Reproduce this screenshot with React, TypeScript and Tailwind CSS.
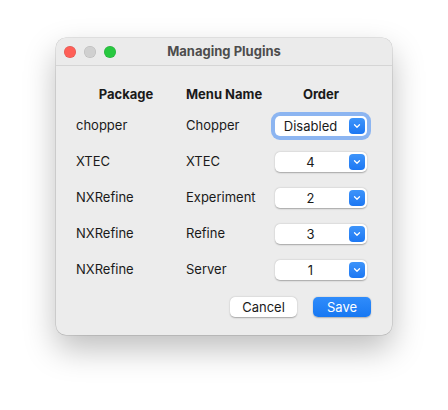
import { ChevronDown } from 'lucide-react';

const rows = [
  { pkg: 'chopper', menu: 'Chopper', order: 'Disabled', focused: true },
  { pkg: 'XTEC', menu: 'XTEC', order: '4' },
  { pkg: 'NXRefine', menu: 'Experiment', order: '2' },
  { pkg: 'NXRefine', menu: 'Refine', order: '3' },
  { pkg: 'NXRefine', menu: 'Server', order: '1' },
];

function Combo({ value, focused }: { value: string; focused?: boolean }) {
  return (
    <div
      className={
        'flex h-5 w-[92px] items-center rounded-[5px] bg-white shadow-[0_0.5px_1.5px_rgba(0,0,0,0.3)] ' +
        (focused ? 'ring-[4px] ring-[#8cb5f1]' : '')
      }
    >
      <span className="flex-1 pr-[3px] text-center text-[13px] leading-none text-[#1a1a1a]">{value}</span>
      <span className="mr-[2px] flex h-4 w-4 items-center justify-center rounded-[4px] bg-gradient-to-b from-[#3d94fa] to-[#1c77f3]">
        <ChevronDown size={10} strokeWidth={3} className="text-white" />
      </span>
    </div>
  );
}

export default function App() {
  return (
    <div
      className="h-[410px] w-[448px] bg-white pl-[56px] pt-[38px]"
      style={{ fontFamily: 'Inter, "Liberation Sans", sans-serif' }}
    >
      {/* Window */}
      <div className="flex h-[297px] w-[336px] flex-col overflow-hidden rounded-[10px] bg-[#ececec] shadow-[0_14px_32px_rgba(0,0,0,0.26),0_0_0_0.5px_rgba(0,0,0,0.18)]">
        {/* Title bar */}
        <div className="relative flex h-[28px] items-center border-b border-[#d5d5d5] bg-[#ebebeb]">
          <div className="absolute left-[8px] flex gap-2">
            <span className="h-3 w-3 rounded-full bg-[#fe5f57] shadow-[inset_0_0_0_0.5px_rgba(0,0,0,0.15)]" />
            <span className="h-3 w-3 rounded-full bg-[#d0d0d0] shadow-[inset_0_0_0_0.5px_rgba(0,0,0,0.12)]" />
            <span className="h-3 w-3 rounded-full bg-[#28c840] shadow-[inset_0_0_0_0.5px_rgba(0,0,0,0.15)]" />
          </div>
          <div className="flex-1 text-center text-[13px] font-bold text-[#4d4d4d]">Managing Plugins</div>
        </div>

        {/* Body */}
        <div className="flex flex-1 flex-col pl-5 pr-[21px] pt-[16px]">
          <div className="grid grid-cols-[110px_88px_94px] text-[13px] text-[#1a1a1a]">
            <div className="flex h-[26px] items-center justify-center pr-[10px] font-bold">Package</div>
            <div className="flex h-[26px] items-center font-bold">Menu Name</div>
            <div className="flex h-[26px] items-center justify-center font-bold">Order</div>
            {rows.map((r, i) => (
              <div key={i} className="contents">
                <div className="flex h-9 items-center">{r.pkg}</div>
                <div className="flex h-9 items-center">{r.menu}</div>
                <div className="flex h-9 items-center justify-center">
                  <Combo value={r.order} focused={r.focused} />
                </div>
              </div>
            ))}
          </div>

          <div className="mt-[9px] flex justify-end gap-4">
            <button className="h-5 w-[67px] rounded-[5px] bg-white text-[13px] leading-none text-[#1a1a1a] shadow-[0_0.5px_1.5px_rgba(0,0,0,0.3)]">
              Cancel
            </button>
            <button className="h-5 w-[58px] rounded-[5px] bg-gradient-to-b from-[#2f8cfb] to-[#1778f2] text-[13px] leading-none text-white shadow-[0_0.5px_1.5px_rgba(0,0,0,0.25)]">
              Save
            </button>
          </div>
        </div>
      </div>
    </div>
  );
}
